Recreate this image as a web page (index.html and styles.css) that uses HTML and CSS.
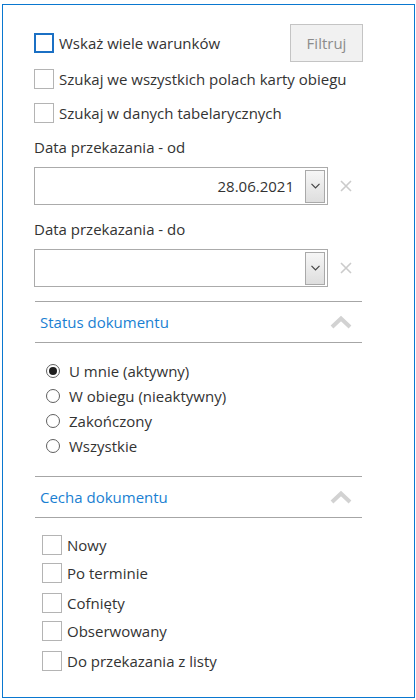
FILE: index.html
```html
<!DOCTYPE html>
<html lang="pl">
<head>
<meta charset="utf-8">
<title>Filtr dokumentów</title>
<link rel="stylesheet" href="styles.css">
</head>
<body>
<div class="panel">
  <div class="row-top">
    <label class="check"><span class="box box-focus"></span><span>Wskaż wiele warunków</span></label>
    <button class="btn" type="button">Filtruj</button>
  </div>
  <label class="check opt2"><span class="box"></span><span>Szukaj we wszystkich polach karty obiegu</span></label>
  <label class="check opt3"><span class="box"></span><span>Szukaj w danych tabelarycznych</span></label>

  <div class="field-label lbl1">Data przekazania - od</div>
  <div class="field inp1">
    <div class="input"><span class="value">28.06.2021</span><span class="drop"><svg width="9" height="6" viewBox="0 0 9 6"><path d="M0.5 0.8 L4.5 4.8 L8.5 0.8" fill="none" stroke="#444" stroke-width="1.2"/></svg></span></div>
    <svg class="clear" width="12" height="12" viewBox="0 0 12 12"><path d="M1 1 L11 11 M11 1 L1 11" stroke="#cbcbcb" stroke-width="1.6"/></svg>
  </div>

  <div class="field-label lbl2">Data przekazania - do</div>
  <div class="field inp2">
    <div class="input"><span class="value"></span><span class="drop"><svg width="9" height="6" viewBox="0 0 9 6"><path d="M0.5 0.8 L4.5 4.8 L8.5 0.8" fill="none" stroke="#444" stroke-width="1.2"/></svg></span></div>
    <svg class="clear" width="12" height="12" viewBox="0 0 12 12"><path d="M1 1 L11 11 M11 1 L1 11" stroke="#cbcbcb" stroke-width="1.6"/></svg>
  </div>

  <div class="section sec1">
    <span class="section-title">Status dokumentu</span>
    <svg class="chev" width="22" height="14" viewBox="0 0 22 14"><path d="M2 12 L11 3.5 L20 12" fill="none" stroke="#d2d2d2" stroke-width="4"/></svg>
  </div>
  <div class="radios">
    <label class="radio"><span class="dot on"></span><span>U mnie (aktywny)</span></label>
    <label class="radio"><span class="dot"></span><span>W obiegu (nieaktywny)</span></label>
    <label class="radio"><span class="dot"></span><span>Zakończony</span></label>
    <label class="radio"><span class="dot"></span><span>Wszystkie</span></label>
  </div>

  <div class="section sec2">
    <span class="section-title">Cecha dokumentu</span>
    <svg class="chev" width="22" height="14" viewBox="0 0 22 14"><path d="M2 12 L11 3.5 L20 12" fill="none" stroke="#d2d2d2" stroke-width="4"/></svg>
  </div>
  <div class="features">
    <label class="check feat"><span class="box"></span><span>Nowy</span></label>
    <label class="check feat"><span class="box"></span><span>Po terminie</span></label>
    <label class="check feat f3"><span class="box"></span><span>Cofnięty</span></label>
    <label class="check feat"><span class="box"></span><span>Obserwowany</span></label>
    <label class="check feat f5"><span class="box"></span><span>Do przekazania z listy</span></label>
  </div>
</div>
</body>
</html>
```
FILE: styles.css
```css
html, body {
  margin: 0;
  padding: 0;
  background: #ffffff;
}

body {
  font-family: "Open Sans", "Noto Sans", sans-serif;
  font-size: 15px;
  color: #333333;
}

.panel {
  box-sizing: border-box;
  margin: 4px 1px 0 2px;
  height: 694px;
  border: 1px solid #0a78d0;
  padding: 19px 0 0 31px;
}

.row-top {
  display: flex;
  align-items: center;
  height: 38px;
  width: 329px;
  justify-content: space-between;
}

.check {
  display: flex;
  align-items: center;
  gap: 5px;
  height: 20px;
  line-height: 20px;
}

.box {
  box-sizing: border-box;
  width: 20px;
  height: 20px;
  border: 1px solid #b4b4b4;
  background: #fff;
  flex: none;
}

.box-focus {
  border: 2px solid #1b70c4;
}

.btn {
  box-sizing: border-box;
  width: 73px;
  height: 38px;
  border: 1px solid #c4c4c4;
  background: #f1f1f1;
  color: #8c8c8c;
  font-family: inherit;
  font-size: 15px;
  padding: 0;
}

.opt2 { margin-top: 7px; }
.opt3 { margin-top: 14px; }

.field-label {
  line-height: 20px;
  height: 20px;
}

.lbl1 { margin-top: 14px; }
.lbl2 { margin-top: 14px; }

.field {
  display: flex;
  align-items: center;
  gap: 12px;
}

.inp1 { margin-top: 10px; }
.inp2 { margin-top: 10px; }

.input {
  box-sizing: border-box;
  width: 294px;
  height: 38px;
  border: 1px solid #ababab;
  display: flex;
  align-items: center;
  justify-content: flex-end;
  padding-right: 2px;
}

.value {
  margin-right: 11px;
  color: #333;
}

.drop {
  box-sizing: border-box;
  width: 20px;
  height: 33px;
  border: 1px solid #a9a9a9;
  background: linear-gradient(#f6f6f6, #dedede);
  display: flex;
  align-items: center;
  justify-content: center;
}

.clear {
  flex: none;
}

.section {
  box-sizing: border-box;
  width: 327px;
  height: 42px;
  margin-left: 1px;
  border-top: 1px solid #a6a6a6;
  border-bottom: 1px solid #a6a6a6;
  display: flex;
  align-items: center;
  justify-content: space-between;
  padding: 0 10px 0 5px;
}

.sec1 { margin-top: 14px; }
.sec2 { margin-top: 18px; }

.section-title {
  color: #1a7fd2;
  font-size: 15px;
}

.radios {
  display: flex;
  flex-direction: column;
  padding: 15px 0 0 12px;
}

.radio {
  display: flex;
  align-items: center;
  gap: 9px;
  height: 25px;
}

.dot {
  box-sizing: border-box;
  width: 14px;
  height: 14px;
  border: 1px solid #5f5f5f;
  border-radius: 50%;
  background: #fff;
  display: flex;
  align-items: center;
  justify-content: center;
  flex: none;
}

.dot.on::after {
  content: "";
  width: 8px;
  height: 8px;
  border-radius: 50%;
  background: #1e1e1e;
}

.features {
  display: flex;
  flex-direction: column;
  padding: 17px 0 0 8px;
}

.feat { margin-bottom: 8px; }
.feat.f3 { margin-top: 2px; }
.feat.f5 { margin-top: 2px; }
```
